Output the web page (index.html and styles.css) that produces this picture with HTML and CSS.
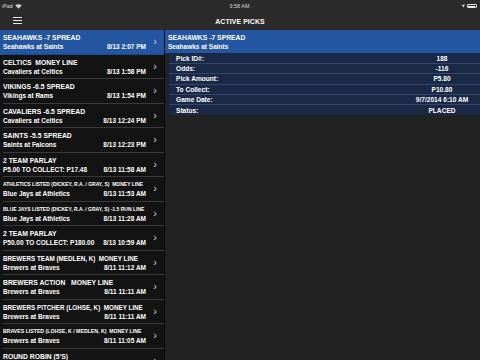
FILE: index.html
```html
<!DOCTYPE html>
<html lang="en">
<head>
  <meta charset="UTF-8">
  <title>Active Picks</title>
  <link rel="stylesheet" href="styles.css">
</head>
<body>
  <div class="statusbar">
    <div class="status-left">iPad
      <svg class="wifi" width="7" height="5" viewBox="0 0 7 5"><path d="M0.3 1.6 A4.5 4.5 0 0 1 6.7 1.6 L3.5 4.8 Z" fill="#cfcfcf"/></svg>
    </div>
    <div class="status-time">9:58 AM</div>
    <div class="status-right">
      <svg width="4" height="4" viewBox="0 0 4 4"><path d="M4 0 L0 1.8 L2 2 L2.2 4 Z" fill="#dcdcdc"/></svg>
      <span class="battery"><span class="battery-fill"></span></span>
    </div>
  </div>

  <div class="navbar">
    <div class="menu"><span></span><span></span><span></span></div>
    <div class="nav-title">ACTIVE PICKS</div>
  </div>

  <div class="main">
    <ul class="picks">
      <li class="pick selected">
        <div class="pick-text"><div class="pick-title">SEAHAWKS -7 SPREAD</div><div class="pick-sub"><span>Seahawks at Saints</span><span>8/13 2:07 PM</span></div></div>
        <div class="chev">&#8250;</div>
      </li>
      <li class="pick">
        <div class="pick-text"><div class="pick-title">CELTICS&nbsp; MONEY LINE</div><div class="pick-sub"><span>Cavaliers at Celtics</span><span>8/13 1:58 PM</span></div></div>
        <div class="chev">&#8250;</div>
      </li>
      <li class="pick">
        <div class="pick-text"><div class="pick-title">VIKINGS -6.5 SPREAD</div><div class="pick-sub"><span>Vikings at Rams</span><span>8/13 1:54 PM</span></div></div>
        <div class="chev">&#8250;</div>
      </li>
      <li class="pick">
        <div class="pick-text"><div class="pick-title">CAVALIERS -6.5 SPREAD</div><div class="pick-sub"><span>Cavaliers at Celtics</span><span>8/13 12:24 PM</span></div></div>
        <div class="chev">&#8250;</div>
      </li>
      <li class="pick">
        <div class="pick-text"><div class="pick-title">SAINTS -5.5 SPREAD</div><div class="pick-sub"><span>Saints at Falcons</span><span>8/13 12:23 PM</span></div></div>
        <div class="chev">&#8250;</div>
      </li>
      <li class="pick">
        <div class="pick-text"><div class="pick-title">2 TEAM PARLAY</div><div class="pick-sub"><span>P5.00 TO COLLECT: P17.48</span><span>8/13 11:58 AM</span></div></div>
        <div class="chev">&#8250;</div>
      </li>
      <li class="pick">
        <div class="pick-text"><div class="pick-title small">ATHLETICS LISTED (DICKEY, R.A. / GRAY, S)&nbsp; MONEY LINE</div><div class="pick-sub"><span>Blue Jays at Athletics</span><span>8/13 11:53 AM</span></div></div>
        <div class="chev">&#8250;</div>
      </li>
      <li class="pick">
        <div class="pick-text"><div class="pick-title tiny">BLUE JAYS LISTED (DICKEY, R.A. / GRAY, S) -1.5 RUN LINE</div><div class="pick-sub"><span>Blue Jays at Athletics</span><span>8/13 11:28 AM</span></div></div>
        <div class="chev">&#8250;</div>
      </li>
      <li class="pick">
        <div class="pick-text"><div class="pick-title">2 TEAM PARLAY</div><div class="pick-sub"><span>P50.00 TO COLLECT: P180.00</span><span>8/13 10:59 AM</span></div></div>
        <div class="chev">&#8250;</div>
      </li>
      <li class="pick">
        <div class="pick-text"><div class="pick-title fit">BREWERS TEAM (MEDLEN, K)&nbsp; MONEY LINE</div><div class="pick-sub"><span>Brewers at Braves</span><span>8/11 11:12 AM</span></div></div>
        <div class="chev">&#8250;</div>
      </li>
      <li class="pick">
        <div class="pick-text"><div class="pick-title">BREWERS ACTION&nbsp;&nbsp; MONEY LINE</div><div class="pick-sub"><span>Brewers at Braves</span><span>8/11 11:11 AM</span></div></div>
        <div class="chev">&#8250;</div>
      </li>
      <li class="pick">
        <div class="pick-text"><div class="pick-title fit">BREWERS PITCHER (LOHSE, K)&nbsp; MONEY LINE</div><div class="pick-sub"><span>Brewers at Braves</span><span>8/11 11:11 AM</span></div></div>
        <div class="chev">&#8250;</div>
      </li>
      <li class="pick">
        <div class="pick-text"><div class="pick-title braves">BRAVES LISTED (LOHSE, K / MEDLEN, K)&nbsp; MONEY LINE</div><div class="pick-sub"><span>Brewers at Braves</span><span>8/11 11:05 AM</span></div></div>
        <div class="chev">&#8250;</div>
      </li>
      <li class="pick">
        <div class="pick-text"><div class="pick-title">ROUND ROBIN (5'S)</div><div class="pick-sub"><span>&nbsp;</span><span></span></div></div>
        <div class="chev">&#8250;</div>
      </li>
    </ul>

    <div class="detail">
      <div class="detail-head">
        <div class="pick-title">SEAHAWKS -7 SPREAD</div>
        <div class="detail-sub">Seahawks at Saints</div>
      </div>
      <div class="detail-rows">
        <div class="row"><span class="label">Pick ID#:</span><span class="value">188</span></div>
        <div class="row"><span class="label">Odds:</span><span class="value">-116</span></div>
        <div class="row"><span class="label">Pick Amount:</span><span class="value">P5.80</span></div>
        <div class="row"><span class="label">To Collect:</span><span class="value">P10.80</span></div>
        <div class="row"><span class="label">Game Date:</span><span class="value">9/7/2014 6:10 AM</span></div>
        <div class="row"><span class="label">Status:</span><span class="value">PLACED</span></div>
      </div>
    </div>
  </div>
</body>
</html>
```

FILE: styles.css
```css
body {
  margin: 0;
  width: 480px;
  height: 360px;
  overflow: hidden;
  background: #222222;
  color: #fff;
  font-family: "Liberation Sans", Arial, sans-serif;
  font-weight: bold;
}

.statusbar {
  height: 12px;
  background: #2b2b2b;
  display: flex;
  align-items: center;
  justify-content: space-between;
  padding: 0 3px 0 2px;
  font-size: 5.4px;
  font-weight: normal;
  color: #d8d8d8;
}

.status-left {
  flex: 1;
  display: flex;
  align-items: center;
  gap: 2px;
}

.status-time {
  flex: 1;
  text-align: center;
}

.status-right {
  flex: 1;
  display: flex;
  justify-content: flex-end;
  align-items: center;
  gap: 2px;
}

.battery {
  width: 10px;
  height: 4px;
  border: 1px solid #e0e0e0;
  border-radius: 1px;
  padding: 0.5px;
  box-sizing: border-box;
  display: flex;
}

.battery-fill {
  flex: 1;
  background: #f0f0f0;
}

.navbar {
  height: 18px;
  background: #2b2b2b;
  display: flex;
  align-items: center;
  justify-content: center;
  position: relative;
}

.menu {
  position: absolute;
  left: 13px;
  top: 4.5px;
  width: 9px;
  display: flex;
  flex-direction: column;
  gap: 1.6px;
}

.menu span {
  height: 1.6px;
  background: #e8e8e8;
}

.nav-title {
  font-size: 6.9px;
  letter-spacing: 0.1px;
}

.main {
  display: flex;
  height: 330px;
}

.picks {
  list-style: none;
  margin: 0;
  padding: 0;
  width: 164px;
  background: #131313;
  border-right: 1px solid #0a0a0a;
}

.pick {
  height: 24.5px;
  box-sizing: border-box;
  display: flex;
  align-items: center;
  padding-left: 3px;
  position: relative;
}

.pick::after {
  content: "";
  position: absolute;
  left: 3px;
  right: 0;
  bottom: 0;
  height: 1px;
  background: #3a3a3a;
}

.pick.selected {
  background: #2355a0;
}

.pick.selected::after {
  background: #1d4a8c;
}

.pick-text {
  width: 143px;
}

.pick-title {
  font-size: 6.8px;
  line-height: 9px;
  white-space: nowrap;
}

.pick-title.fit {
  font-size: 6.3px;
}

.pick-title.small {
  font-size: 5px;
}

.pick-title.tiny {
  font-size: 5px;
}

.pick-title.braves {
  font-size: 5.2px;
}

.pick-sub {
  display: flex;
  justify-content: space-between;
  font-size: 6.5px;
  line-height: 9px;
}

.chev {
  width: 18px;
  text-align: center;
  font-size: 11px;
  font-weight: normal;
  color: #d0d0d0;
  margin-top: -2px;
}

.detail {
  flex: 1;
  background: #222222;
}

.detail-head {
  height: 24px;
  background: #2355a0;
  padding: 3px 0 0 3px;
  box-sizing: border-box;
  border-bottom: 1px solid #14284a;
}

.detail-sub {
  font-size: 6.5px;
  line-height: 9px;
}

.detail-rows {
  margin-left: 4px;
  background: #1a2946;
}

.row {
  height: 10.2px;
  box-sizing: border-box;
  border-bottom: 1px solid #36466a;
  display: flex;
  align-items: center;
  font-size: 6.6px;
  padding-left: 7px;
}

.row:last-child {
  border-bottom: none;
}

.label {
  flex: 1;
}

.value {
  width: 76px;
  text-align: center;
}
```
